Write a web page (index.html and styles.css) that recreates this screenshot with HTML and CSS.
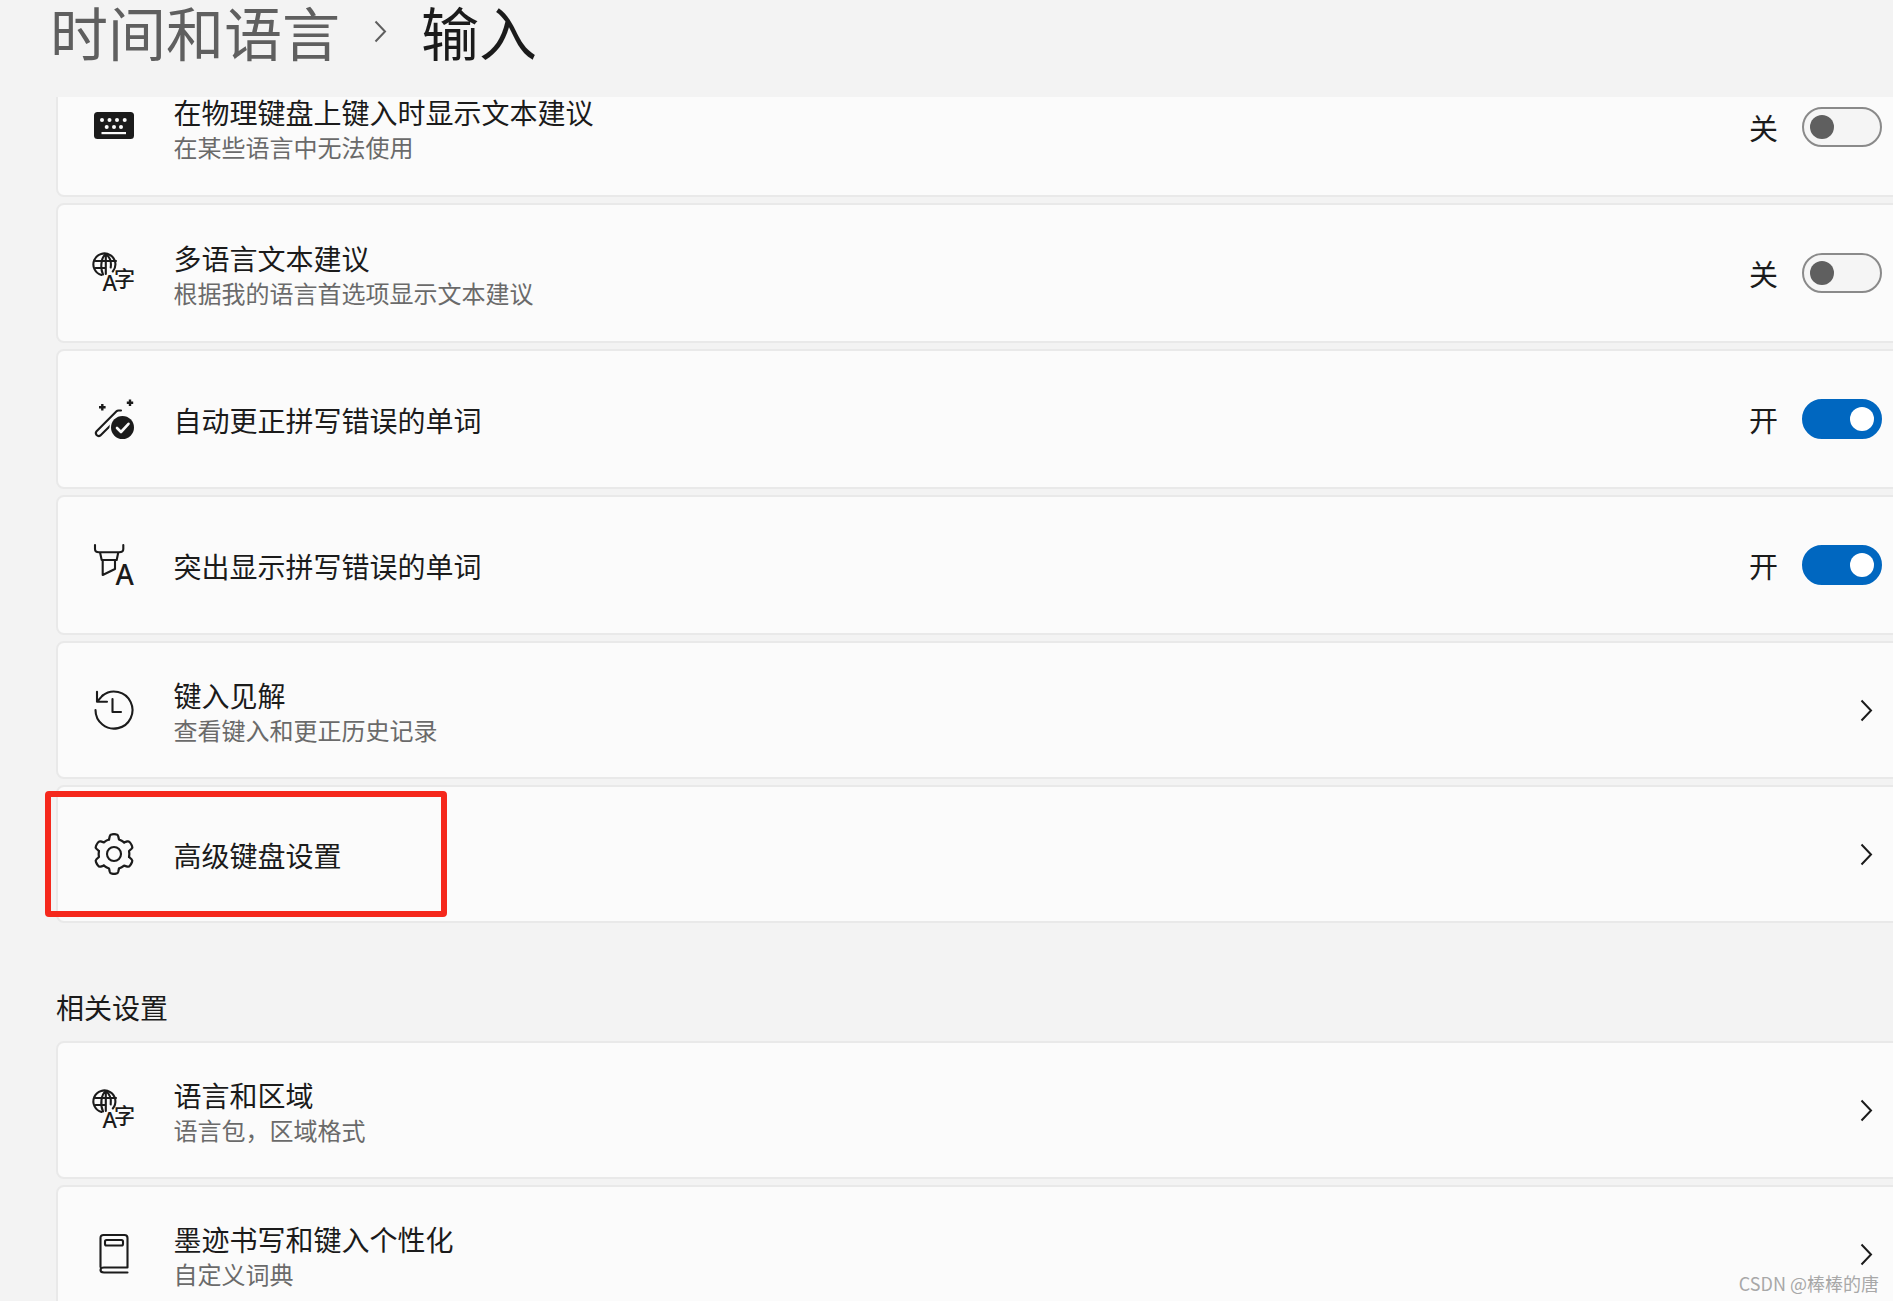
FILE: index.html
```html
<!DOCTYPE html>
<html lang="zh-CN">
<head>
<meta charset="utf-8">
<title>输入</title>
<link rel="stylesheet" href="styles.css">
</head>
<body>
<svg class="defs" width="0" height="0" aria-hidden="true">
  <defs>
    <g id="globe-icon">
      <path class="ln" d="M18.8 18.5A11 11 0 1 0 7.5 22"/>
      <path class="ln" d="M1.6 8H22M1.6 15H10.5M11.8 1V21M11.8 1C7 4.5 6 15 9 21.5M11.8 1C16.4 4.5 17.4 10 16.7 14.5" />
      <text class="gl gl-a" x="8.5" y="37.5">A</text>
      <text class="gl gl-z" x="20" y="33">字</text>
    </g>
    <path id="chev" d="M1.5 1.5L11 11.5L1.5 21.5"/>
    <path id="gear-seg" d="M15.3 6.3L16 3.2Q16.4 1.6 18 1.5Q20 1.2 22 1.5Q23.6 1.6 24 3.2L24.7 6.3A14.5 14.5 0 0 1 29.5 9.1"/>
  </defs>
</svg>
<div class="page">
  <header class="header">
    <span class="crumb">时间和语言</span>
    <svg class="crumb-sep" viewBox="0 0 13 23" width="13" height="23"><use href="#chev"/></svg>
    <span class="crumb-current">输入</span>
  </header>
  <main class="scroller">
    <section class="cards cards-first">
      <div class="card">
        <svg class="icon" viewBox="0 0 40 40">
          <rect class="fill" x="0" y="5" width="40" height="27" rx="3.5"/>
          <g class="white">
            <circle cx="8" cy="13" r="2"/><circle cx="15.5" cy="13" r="2"/><circle cx="23" cy="13" r="2"/><circle cx="30.7" cy="13" r="2"/>
            <circle cx="12.7" cy="20" r="2"/><circle cx="20" cy="20" r="2"/><circle cx="27" cy="20" r="2"/>
            <rect x="7.5" y="25" width="24.5" height="2.2"/>
          </g>
        </svg>
        <div class="text"><div class="title">在物理键盘上键入时显示文本建议</div><div class="sub">在某些语言中无法使用</div></div>
        <span class="state">关</span><span class="toggle"><span class="knob"></span></span>
      </div>
      <div class="card">
        <svg class="icon" viewBox="0 0 40 40"><use href="#globe-icon"/></svg>
        <div class="text"><div class="title">多语言文本建议</div><div class="sub">根据我的语言首选项显示文本建议</div></div>
        <span class="state">关</span><span class="toggle"><span class="knob"></span></span>
      </div>
      <div class="card">
        <svg class="icon" viewBox="0 0 40 40">
          <path class="ln" d="M27 11.5L24.5 11.5Q23.3 11.5 22.5 12.3L2.6 32.3Q1 34 2.6 36Q4.6 38 6.4 36.4L23 20"/>
          <path class="ln-thin" d="M8.3 5V11.6M5 8.3H11.6M36 0.5V7M32.8 3.7H39.2"/>
          <circle class="halo" cx="28.5" cy="28.5" r="13"/>
          <circle class="fill" cx="28.5" cy="28.5" r="11.5"/>
          <path class="check" d="M23 29L27 33L34.5 24.8"/>
        </svg>
        <div class="text"><div class="title">自动更正拼写错误的单词</div></div>
        <span class="state">开</span><span class="toggle toggle-on"><span class="knob"></span></span>
      </div>
      <div class="card">
        <svg class="icon" viewBox="0 0 40 40">
          <path class="ln" d="M1 0V4Q1 7.3 5 7.3H25Q29.3 7.3 29.3 4V0M6 7.3L7.7 15H22.7L24.3 7.3M8.7 15V30L21 24V15"/>
          <text class="gl gl-big" x="21.5" y="40">A</text>
        </svg>
        <div class="text"><div class="title">突出显示拼写错误的单词</div></div>
        <span class="state">开</span><span class="toggle toggle-on"><span class="knob"></span></span>
      </div>
      <div class="card card-short">
        <svg class="icon" viewBox="0 0 40 40">
          <path class="ln" d="M8.5 5.6A18.5 18.5 0 1 1 1.5 20"/>
          <path class="ln" d="M3 1.7V11.7H13M3 11.7L8.5 5.6M18.5 9V22H27"/>
        </svg>
        <div class="text"><div class="title">键入见解</div><div class="sub">查看键入和更正历史记录</div></div>
        <svg class="chevron" viewBox="0 0 13 23" width="13" height="23"><use href="#chev"/></svg>
      </div>
      <div class="card card-short">
        <svg class="icon" viewBox="0 0 40 40">
          <g class="ln" transform="translate(20 20) scale(1.06) translate(-20 -20)">
            <use href="#gear-seg"/>
            <use href="#gear-seg" transform="rotate(60 20 20)"/>
            <use href="#gear-seg" transform="rotate(120 20 20)"/>
            <use href="#gear-seg" transform="rotate(180 20 20)"/>
            <use href="#gear-seg" transform="rotate(240 20 20)"/>
            <use href="#gear-seg" transform="rotate(300 20 20)"/>
          </g>
          <circle class="ln" cx="20" cy="20" r="7"/>
        </svg>
        <div class="text"><div class="title">高级键盘设置</div></div>
        <svg class="chevron" viewBox="0 0 13 23" width="13" height="23"><use href="#chev"/></svg>
      </div>
    </section>
    <h2 class="section-title">相关设置</h2>
    <section class="cards">
      <div class="card card-short">
        <svg class="icon" viewBox="0 0 40 40"><use href="#globe-icon"/></svg>
        <div class="text"><div class="title">语言和区域</div><div class="sub">语言包，区域格式</div></div>
        <svg class="chevron" viewBox="0 0 13 23" width="13" height="23"><use href="#chev"/></svg>
      </div>
      <div class="card card-short">
        <svg class="icon" viewBox="0 0 40 40">
          <path class="ln" d="M6.5 33V4Q6.5 1 9.5 1H30.5Q33.5 1 33.5 4V33.5H10Q6.5 33.5 6.5 36Q6.5 38.5 10 38.5H33.5"/>
          <rect class="ln" x="11" y="6" width="18" height="5.5" rx="1.5"/>
        </svg>
        <div class="text"><div class="title">墨迹书写和键入个性化</div><div class="sub">自定义词典</div></div>
        <svg class="chevron" viewBox="0 0 13 23" width="13" height="23"><use href="#chev"/></svg>
      </div>
    </section>
  </main>
  <div class="highlight"></div>
  <div class="watermark">CSDN @棒棒的唐</div>
</div>
</body>
</html>
```
FILE: styles.css
```css
* { box-sizing: border-box; }
html, body { margin: 0; height: 100%; overflow: hidden; }
body {
  background: #f3f3f3;
  color: #1b1b1b;
  font-family: "Noto Sans CJK SC", "Noto Sans", sans-serif;
  font-weight: 400;
}
.defs { position: absolute; }
.page { position: relative; display: flex; flex-direction: column; height: 1301px; overflow: hidden; }
.header {
  position: relative;
  z-index: 1;
  flex: none;
  height: 97px;
  padding: 0 0 35px 50px;
  background: #f3f3f3;
  display: flex;
  align-items: center;
  font-size: 58px;
  line-height: 60px;
}
.crumb { color: #5f5f5f; }
.crumb-sep { margin: 0 34px 0 34px; fill: none; stroke: #5f5f5f; stroke-width: 2; }
.crumb-current { color: #1b1b1b; }
.scroller { flex: 1; min-height: 0; padding-left: 56px; }
.cards { display: flex; flex-direction: column; gap: 6px; margin-right: -20px; }
.cards-first { margin-top: -40px; }
.card {
  flex: none;
  height: 140px;
  display: flex;
  align-items: center;
  padding: 0 29px 0 36px;
  background: #fbfbfb;
  border: 2px solid #e9e9e9;
  border-radius: 8px;
}
.card-short { height: 138px; }
.icon { flex: none; width: 40px; height: 40px; margin-right: 39.5px; overflow: visible; }
.fill { fill: #1b1b1b; }
.white { fill: #fbfbfb; }
.halo { fill: #fbfbfb; }
.ln { fill: none; stroke: #1b1b1b; stroke-width: 2.1; stroke-linejoin: round; stroke-linecap: round; }
.ln-thin { fill: none; stroke: #1b1b1b; stroke-width: 2.4; }
.check { fill: none; stroke: #fbfbfb; stroke-width: 2.6; stroke-linecap: round; stroke-linejoin: round; }
.gl { fill: #1b1b1b; font-family: "Noto Sans CJK SC", sans-serif; font-weight: 500; }
.gl-a { font-size: 22px; font-family: "Noto Sans", sans-serif; }
.gl-z { font-size: 21px; }
.gl-big { font-size: 28px; font-family: "Noto Sans", sans-serif; }
.text { flex: 1; min-width: 0; padding-top: 2px; }
.title { font-size: 28px; line-height: 36px; color: #1b1b1b; }
.sub { margin: 2px 0 1px; font-size: 24px; line-height: 30px; color: #6a6a6a; }
.state { font-size: 29px; line-height: 36px; margin-right: 24px; }
.toggle {
  flex: none;
  width: 80px;
  height: 40px;
  padding: 0 6px;
  display: flex;
  align-items: center;
  background: #f5f5f5;
  border: 2px solid #8a8a8a;
  border-radius: 20px;
}
.knob { width: 24px; height: 24px; border-radius: 50%; background: #5f5f5f; }
.toggle-on { justify-content: flex-end; background: #0067c0; border-color: #0067c0; }
.toggle-on .knob { background: #fff; }
.chevron { flex: none; margin-right: 9px; fill: none; stroke: #1b1b1b; stroke-width: 2; }
.section-title { margin: 66px 0 16px; font-size: 28px; line-height: 36px; font-weight: 400; color: #1b1b1b; }
.highlight {
  position: absolute;
  left: 45px;
  top: 791px;
  width: 402px;
  height: 126px;
  border: 6px solid #f5281c;
  border-radius: 4px;
}
.watermark {
  position: absolute;
  right: 14px;
  top: 1272px;
  font-size: 18px;
  line-height: 22px;
  color: #a8a8a8;
}
```
